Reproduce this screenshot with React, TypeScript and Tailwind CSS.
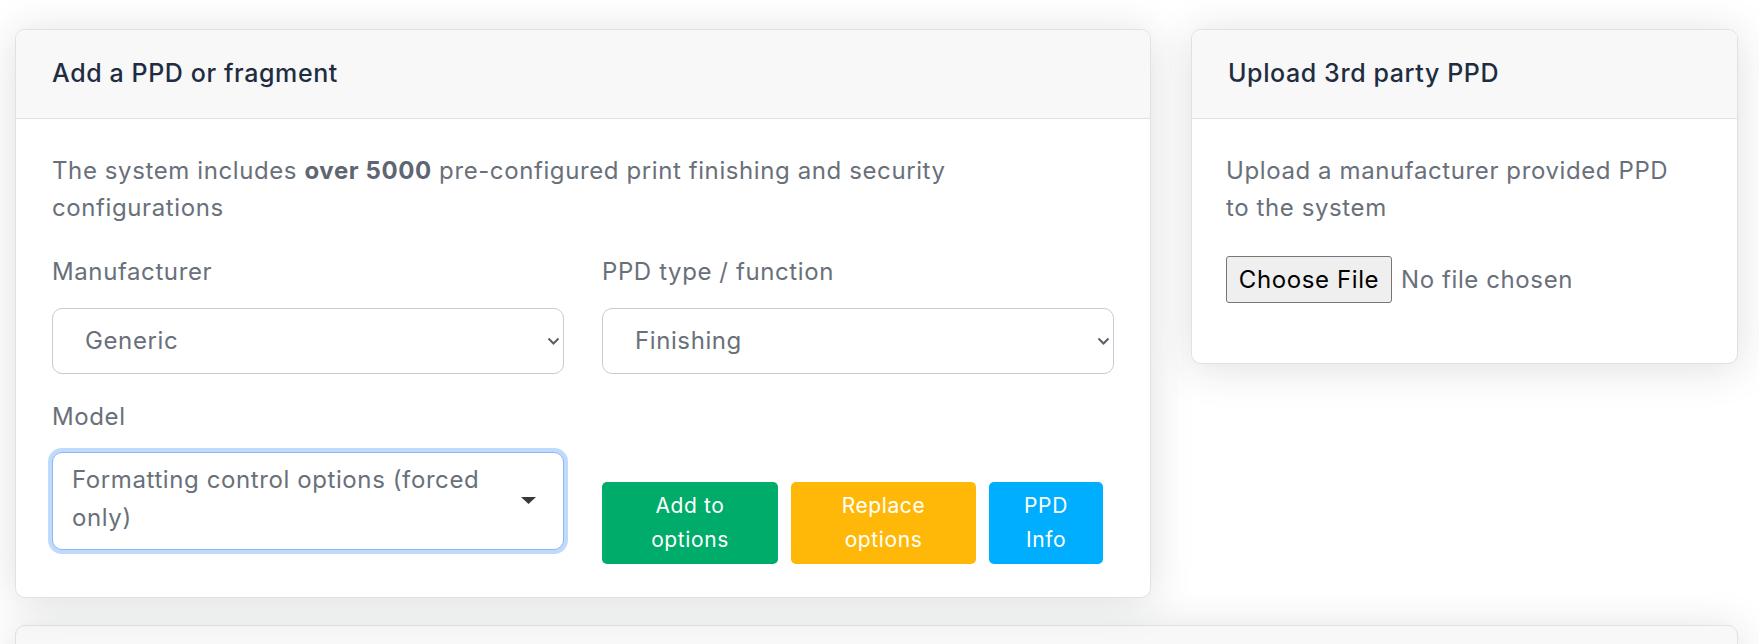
import React from 'react'

const textFont = "font-['Inter',sans-serif] tracking-[0.6px]"

function Chevron() {
  return (
    <svg width="13" height="8" viewBox="0 0 13 8" className="shrink-0">
      <polyline points="1.5,1.5 6.5,6.5 11.5,1.5" fill="none" stroke="#5b5f66" strokeWidth="2" />
    </svg>
  )
}

function FakeSelect({ value }: { value: string }) {
  return (
    <div className="h-[66px] rounded-[10px] border border-[#c5ccd6] bg-white flex items-center justify-between pl-[32px] pr-[3px] text-[24px] text-[#69707a]">
      <span>{value}</span>
      <Chevron />
    </div>
  )
}

function CardHeader({ title }: { title: string }) {
  return (
    <div className="h-[89px] flex items-center px-[36px] bg-[#f8f8f9] border-b border-[#dfe0e2] text-[25px] font-medium text-[#1f2d41]">
      {title}
    </div>
  )
}

export default function App() {
  return (
    <div className={`h-[644px] overflow-hidden bg-white pt-[29px] pl-[15px] ${textFont}`}>
      <div className="flex items-start gap-[40px]">
        {/* left card */}
        <div className="w-[1136px] rounded-[10px] border border-[#e0e1e3] bg-white overflow-hidden shadow-[0_4px_42px_0_rgba(33,40,50,0.15)]">
          <CardHeader title="Add a PPD or fragment" />
          <div className="px-[36px] pt-[33px] pb-[33px]">
            <p className="max-w-[940px] text-[24px] leading-[37px] text-[#69707a] mb-[28px]">
              The system includes <strong className="font-bold text-[#5e6672]">over 5000</strong> pre-configured print finishing and security configurations
            </p>
            <div className="grid grid-cols-2 gap-x-[38px] gap-y-[25px]">
              <div>
                <div className="text-[24px] leading-[36px] text-[#69707a] mb-[18px]">Manufacturer</div>
                <FakeSelect value="Generic" />
              </div>
              <div>
                <div className="text-[24px] leading-[36px] text-[#69707a] mb-[18px]">PPD type / function</div>
                <FakeSelect value="Finishing" />
              </div>
              <div>
                <div className="text-[24px] leading-[36px] text-[#69707a] mb-[17px]">Model</div>
                <div className="h-[98px] rounded-[10px] border border-[#8cb8f5] bg-white shadow-[0_0_0_4px_#c0dafc] flex items-center pl-[19px] pr-[27px] text-[24px] leading-[38px] text-[#69707a]">
                  <span className="w-[440px] pb-[4px]">Formatting control options (forced only)</span>
                  <svg width="15" height="8" viewBox="0 0 15 8" className="ml-auto shrink-0">
                    <polygon points="0,0 15,0 7.5,7" fill="#343a40" />
                  </svg>
                </div>
              </div>
              <div className="pt-[83px] flex gap-[13px] text-[21px] leading-[34px] text-white text-center">
                <button className="w-[176px] h-[82px] rounded-[5px] bg-[#00ac69]">Add to<br />options</button>
                <button className="w-[185px] h-[82px] rounded-[5px] bg-[#ffb808]">Replace<br />options</button>
                <button className="w-[114px] h-[82px] rounded-[5px] bg-[#00aeff]">PPD<br />Info</button>
              </div>
            </div>
          </div>
        </div>

        {/* right card */}
        <div className="w-[547px] rounded-[10px] border border-[#e0e1e3] bg-white overflow-hidden shadow-[0_4px_42px_0_rgba(33,40,50,0.15)]">
          <CardHeader title="Upload 3rd party PPD" />
          <div className="px-[34px] pt-[33px] pb-[60px]">
            <p className="max-w-[455px] text-[24px] leading-[37px] text-[#69707a] mb-[30px]">
              Upload a manufacturer provided PPD to the system
            </p>
            <div className="flex items-center gap-[9px]">
              <span className="h-[47px] w-[166px] flex items-center justify-center rounded-[3px] border border-[#767676] bg-[#efefef] text-[24px] text-black">
                Choose File
              </span>
              <span className="text-[24px] text-[#69707a]">No file chosen</span>
            </div>
          </div>
        </div>
      </div>

      {/* next card, cut off */}
      <div className="mt-[27px] w-[1723px] h-[80px] rounded-[10px] border border-[#e0e1e3] bg-[#f8f8f9] shadow-[0_4px_42px_0_rgba(33,40,50,0.15)]" />
    </div>
  )
}
